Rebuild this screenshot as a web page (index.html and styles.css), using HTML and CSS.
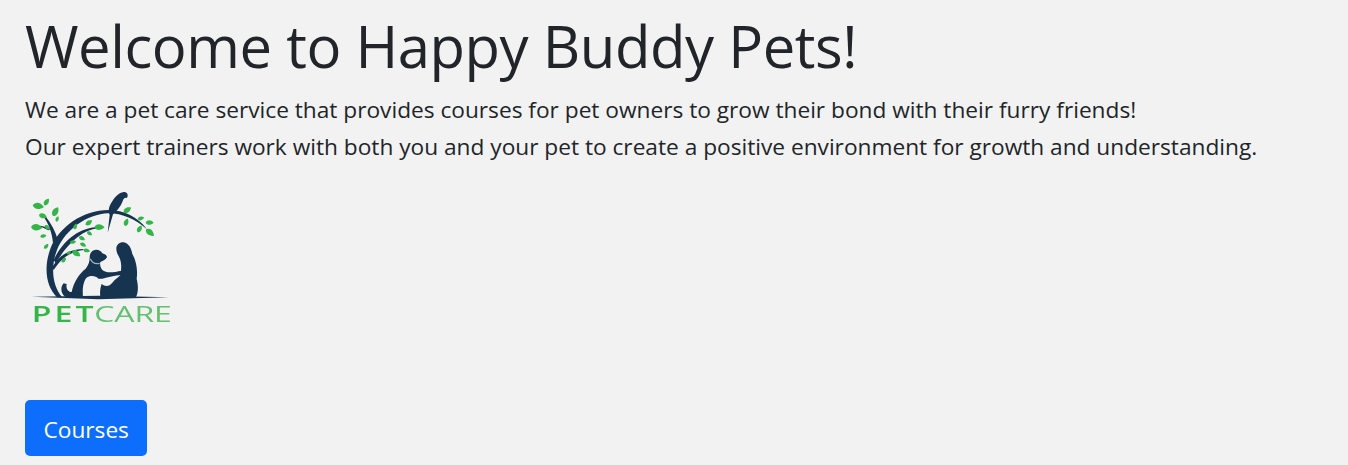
FILE: index.html
```html
<!DOCTYPE html>
<html lang="en">

<head>
    <meta charset="UTF-8">
    <meta name="viewport" content="width=device-width, initial-scale=1.0">
    <title>Happy Buddy Pets</title>
    <link rel="stylesheet" href="styles.css">
</head>

<body>
    <main class="welcome">
        <h1 class="welcome-title">Welcome to Happy Buddy Pets!</h1>
        <p class="welcome-text">We are a pet care service that provides courses for pet owners to grow their bond with their furry friends!<br>Our expert trainers work with both you and your pet to create a positive environment for growth and understanding.</p>

        <svg class="logo" viewBox="30 15 450 450" role="img" aria-label="Pet Care logo">
            <defs>
                <path id="leaf" d="M0 0C6 -13 22 -14 34 0C22 12 6 12 0 0Z"/>
            </defs>
            <!-- tree -->
            <g fill="#16344f">
                <path d="M126 352C92 318 86 262 106 206C132 140 205 90 280 90C327 90 368 110 396 148C362 118 322 100 280 100C216 102 150 150 126 210C106 262 112 318 142 352Z"/>
                <path d="M114 190C112 160 102 132 84 108L88 105C108 128 122 156 128 178Z"/>
                <path d="M100 151C92 146 84 142 74 140L75 137C86 138 98 142 108 147Z"/>
                <path d="M116 240C146 178 195 143 248 141L248 145C204 150 160 186 122 250Z"/>
                <path d="M112 262C130 228 160 208 205 207L205 210C166 214 138 236 116 270Z"/>
            </g>
            <!-- leaves -->
            <g fill="#35b548">
                <use href="#leaf" transform="translate(53 76) rotate(8)"/>
                <use href="#leaf" transform="translate(88 76) rotate(-55) scale(.7)"/>
                <use href="#leaf" transform="translate(72 104) rotate(20) scale(.75)"/>
                <use href="#leaf" transform="translate(114 108) rotate(-60) scale(.9)"/>
                <use href="#leaf" transform="translate(124 125) rotate(-70) scale(.5)"/>
                <use href="#leaf" transform="translate(48 141) rotate(5)"/>
                <use href="#leaf" transform="translate(90 136) rotate(45) scale(.55)"/>
                <use href="#leaf" transform="translate(76 170) rotate(-10) scale(.55)"/>
                <use href="#leaf" transform="translate(88 206) rotate(-50) scale(.55)"/>
                <use href="#leaf" transform="translate(178 148) rotate(-70) scale(.55)"/>
                <use href="#leaf" transform="translate(212 135) rotate(-35) scale(.7)"/>
                <use href="#leaf" transform="translate(238 142) rotate(0) scale(.9)"/>
                <use href="#leaf" transform="translate(216 155) rotate(35) scale(.55)"/>
                <use href="#leaf" transform="translate(192 170) rotate(30) scale(.6)"/>
                <use href="#leaf" transform="translate(165 188) rotate(-10) scale(.55)"/>
                <use href="#leaf" transform="translate(195 190) rotate(25) scale(.6)"/>
                <use href="#leaf" transform="translate(205 210) rotate(10) scale(.6)"/>
                <use href="#leaf" transform="translate(172 212) rotate(35) scale(.85)"/>
                <use href="#leaf" transform="translate(140 247) rotate(-45) scale(.55)"/>
                <use href="#leaf" transform="translate(155 222) rotate(-30) scale(.45)"/>
                <use href="#leaf" transform="translate(326 98) rotate(-35) scale(.8)"/>
                <use href="#leaf" transform="translate(330 138) rotate(-70) scale(.7)"/>
                <use href="#leaf" transform="translate(368 118) rotate(-15) scale(.6)"/>
                <use href="#leaf" transform="translate(368 157) rotate(-60) scale(.7)"/>
                <use href="#leaf" transform="translate(392 128) rotate(0) scale(.7)"/>
                <use href="#leaf" transform="translate(393 148) rotate(40) scale(.9)"/>
            </g>
            <!-- parrot -->
            <path fill="#16344f" d="M278 158L284 105C278 92 282 78 292 64C300 50 312 38 326 36C337 36 341 44 336 54C328 52 326 56 322 66C316 82 304 94 294 103Z"/>
            <!-- dog, with tail and paw reaching for the hand -->
            <path fill="#16344f" d="M146 310C136 320 136 340 152 351L204 351C202 330 204 306 214 294C226 284 244 288 250 296L262 296C280 292 298 286 320 285L320 272C298 276 276 282 262 270C256 262 254 254 256 246C262 244 272 240 276 232C276 226 270 222 262 220C258 212 248 208 240 210C230 212 224 220 224 232C224 246 220 256 212 266C192 282 176 306 170 336C160 336 152 326 155 312Z"/>
            <!-- collar -->
            <path fill="none" stroke="#9db0bf" stroke-width="4" d="M226 236C230 246 240 253 254 250"/>
            <!-- woman -->
            <path fill="#16344f" d="M304 206C304 194 314 186 326 187C340 189 349 204 352 222C363 240 369 270 365 296C371 320 369 340 363 351L256 351C254 338 256 322 260 312C272 322 284 318 292 308C300 298 310 292 316 286C320 262 320 246 312 230C307 222 304 214 304 206Z"/>
            <!-- puppy in front of the dog -->
            <path fill="#f2f2f2" d="M214 296C224 287 238 289 243 298C247 310 243 322 241 332L243 350L235 350L231 334L226 350L206 350C204 328 206 308 214 296Z"/>
            <!-- ground -->
            <path fill="#16344f" d="M50 350L250 347L462 352L250 358Z"/>
            <text class="logo-pet" transform="translate(50 427) scale(1.5 1)" textLength="124">PET</text>
            <text class="logo-care" transform="translate(238 427) scale(1.5 1)" textLength="155">CARE</text>
        </svg>

        <a class="btn-courses" href="#">Courses</a>
    </main>
</body>

</html>
```

FILE: styles.css
```css
* {
    box-sizing: border-box;
}

body {
    margin: 0;
    background: #f2f2f2;
    color: #212529;
    font-family: "Open Sans", "Noto Sans", sans-serif;
}

.welcome {
    padding: 10px 25px 0;
}

.welcome-title {
    margin: 0 0 9px;
    font-size: 58px;
    font-weight: 400;
    line-height: 72px;
    letter-spacing: -0.45px;
}

.welcome-text {
    margin: 0 0 20px;
    font-size: 22.68px;
    line-height: 37px;
}

.logo {
    display: block;
    width: 150px;
    height: 150px;
    margin-bottom: 65px;
    filter: blur(0.35px);
}

.logo-pet,
.logo-care {
    font-size: 64px;
    fill: #35b548;
}

.logo-pet {
    font-weight: 600;
}

.logo-care {
    font-weight: 400;
    fill: #62c06e;
}

.btn-courses {
    display: inline-block;
    padding: 10px 18.5px 6px;
    border-radius: 5px;
    background: #0d6efd;
    color: #fff;
    font-size: 22.68px;
    line-height: 40px;
    text-decoration: none;
}
```
